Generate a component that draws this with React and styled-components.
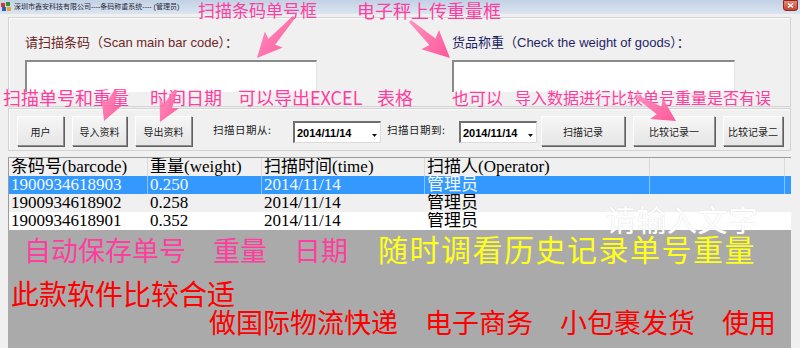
import React from 'react'
import styled, { createGlobalStyle } from 'styled-components'

const GlobalStyle = createGlobalStyle`
  html, body { margin: 0; padding: 0; }
  body {
    width: 800px;
    height: 348px;
    overflow: hidden;
    background: #f0f0f0;
    font-family: "Noto Sans CJK SC", "Liberation Sans", sans-serif;
  }
`

const Window = styled.div`
  position: relative;
  width: 800px;
  height: 348px;
  display: flex;
  flex-direction: column;
  background: #f0f0f0;
  overflow: hidden;
`

const TitleBar = styled.div`
  height: 14px;
  display: flex;
  align-items: center;
  gap: 3px;
  padding: 0 2px 0 1px;
  background: linear-gradient(#c2d1e5, #dce5f0);
  font-family: "Liberation Sans", "Noto Sans CJK SC", sans-serif;
  font-size: 7px;
  line-height: 14px;
  color: #1d2838;
  white-space: nowrap;
`

const Close = styled.div`
  margin-left: auto;
  width: 13px;
  height: 9px;
  margin-top: -3px;
  border-radius: 0 0 3px 3px;
  background: linear-gradient(#e88a7c, #c8412d);
  border: 1px solid #8c2c20;
  display: flex;
  align-items: center;
  justify-content: center;
`

const Body = styled.div`
  flex: 1;
  display: flex;
  flex-direction: column;
  padding: 3px 9px 0 8px;
`

const GroupBox = styled.div`
  box-sizing: border-box;
  height: ${p => p.$h}px;
  margin-bottom: ${p => p.$mb}px;
  border: 1px solid #d3d3d3;
  box-shadow: inset 1px 1px 0 #fbfbfb;
  display: flex;
  padding: ${p => p.$pad};
`

const ToolRow = styled.div`
  height: 30px;
  display: flex;
  align-items: center;
`

const Field = styled.div`
  width: ${p => p.$w}px;
  margin-right: ${p => p.$mr || 0}px;
  display: flex;
  flex-direction: column;
  gap: 9px;
`

const FieldLabel = styled.div`
  font-family: "Liberation Sans", "Noto Sans CJK SC", sans-serif;
  font-size: 13px;
  line-height: 16px;
  color: ${p => p.$color};
  white-space: nowrap;
`

const TextInput = styled.div`
  height: 30px;
  background: #fff;
  border-top: 2px solid #8a8a8a;
  border-left: 2px solid #8a8a8a;
  border-right: 1px solid #e3e3e3;
`

const Button = styled.div`
  box-sizing: border-box;
  width: ${p => p.$w}px;
  height: 30px;
  margin-right: ${p => p.$mr}px;
  display: flex;
  align-items: center;
  justify-content: center;
  background: linear-gradient(#f6f6f6, #e6e6e6);
  border: 1px solid;
  border-color: #fdfdfd #8e8e8e #8e8e8e #fdfdfd;
  box-shadow: 1px 1px 0 #5f5f5f;
  font-size: 10px;
  color: #1b1b1b;
  white-space: nowrap;
`

const DateLabel = styled.div`
  width: ${p => p.$w}px;
  margin-left: ${p => p.$ml}px;
  font-size: 10.5px;
  color: #1b1b1b;
  letter-spacing: 0.5px;
  white-space: nowrap;
  margin-top: -4px;
`

const Combo = styled.div`
  box-sizing: border-box;
  width: ${p => p.$w}px;
  height: 22px;
  margin-top: 2px;
  margin-right: ${p => p.$mr}px;
  background: #fff;
  border-top: 2px solid #6f6f6f;
  border-left: 2px solid #6f6f6f;
  border-right: 1px solid #dcdcdc;
  border-bottom: 1px solid #dcdcdc;
  display: flex;
  align-items: center;
  padding: 0 3px 0 2px;
  font-family: "Liberation Sans", sans-serif;
  font-weight: bold;
  font-size: 11px;
  color: #000;
  svg { margin-left: auto; margin-top: 5px; }
`

const Table = styled.div`
  margin-top: 6px;
  display: grid;
  grid-template-columns: 139px 114px 163px 225px 135px 1fr;
  border-top: 1px solid #9b9b9b;
  border-left: 1px solid #9b9b9b;
  background: #fff;
  font-family: "Liberation Serif", "Noto Sans CJK SC", serif;
  font-size: 17px;
`

const Cell = styled.div`
  height: 18px;
  line-height: 18px;
  padding-left: 2px;
  overflow: hidden;
  white-space: nowrap;
  background: ${p => p.$bg};
  color: ${p => p.$fg};
  border-right: 1px solid ${p => p.$line};
`

const GrayArea = styled.div`
  flex: 1;
  background: #aaaaaa;
  padding: 3px 0 0 0;
  display: flex;
  flex-direction: column;
`

const Line = styled.div`
  display: flex;
  align-items: baseline;
  padding-left: ${p => p.$pl}px;
  margin-top: ${p => p.$mt || 0}px;
  white-space: nowrap;
`

const Big = styled.span`
  font-size: ${p => p.$size}px;
  line-height: ${p => p.$lh}px;
  color: ${p => p.$color};
  letter-spacing: ${p => p.$ls || 0}px;
  margin-left: ${p => p.$ml || 0}px;
`

const Overlay = styled.div`
  position: absolute;
  inset: 0;
  pointer-events: none;
`

const Note = styled.span`
  position: absolute;
  left: ${p => p.$x}px;
  top: ${p => p.$y}px;
  font-size: ${p => p.$size}px;
  line-height: 1;
  color: #ff3d9e;
  white-space: nowrap;
`

const Watermark = styled.span`
  position: absolute;
  left: 606px;
  top: 203px;
  font-size: 30px;
  line-height: 1;
  color: #ffffff;
  text-shadow: 0 0 1px #c9c9c9;
  letter-spacing: 0.5px;
`

const ArrowLayer = styled.svg`
  position: absolute;
  left: 0;
  top: 0;
`

function arrowPoints([x1, y1, x2, y2, hw, hl]) {
  const dx = x2 - x1
  const dy = y2 - y1
  const len = Math.hypot(dx, dy)
  const ux = dx / len
  const uy = dy / len
  const nx = -uy
  const ny = ux
  const bx = x2 - ux * hl
  const by = y2 - uy * hl
  const s0 = 1.5
  const s1 = 4.5
  const pts = [
    [x1 + nx * s0, y1 + ny * s0],
    [bx + nx * s1, by + ny * s1],
    [bx + nx * hw / 2 - ux * 3, by + ny * hw / 2 - uy * 3],
    [x2, y2],
    [bx - nx * hw / 2 - ux * 3, by - ny * hw / 2 - uy * 3],
    [bx - nx * s1, by - ny * s1],
    [x1 - nx * s0, y1 - ny * s0],
  ]
  return pts.map(p => p.map(v => v.toFixed(1)).join(',')).join(' ')
}

const arrows = [
  [294, 17, 257, 58, 24, 22],
  [410, 21, 450, 58, 26, 24],
  [116, 90, 104, 121, 22, 18],
  [176, 90, 160, 122, 22, 18],
  [636, 96, 676, 121, 24, 20],
]

const columns = ['条码号(barcode)', '重量(weight)', '扫描时间(time)', '扫描人(Operator)', '']

const rows = [
  ['1900934618903', '0.250', '2014/11/14', '管理员', ''],
  ['1900934618902', '0.258', '2014/11/14', '管理员', ''],
  ['1900934618901', '0.352', '2014/11/14', '管理员', ''],
]

const rowLook = [
  { bg: '#3399ff', fg: '#f4f8ff', line: '#8cc2ff' },
  { bg: '#f0f0f0', fg: '#000', line: '#f0f0f0' },
  { bg: '#ffffff', fg: '#000', line: '#ffffff' },
]

const Chevron = () => (
  <svg width="5" height="3" viewBox="0 0 5 3">
    <path d="M0 0 L2.5 3 L5 0 Z" fill="#111" />
  </svg>
)

const AppIcon = () => (
  <svg width="10" height="10" viewBox="0 0 10 10">
    <rect x="0" y="1" width="4" height="4" fill="#d23b2b" />
    <rect x="5" y="0" width="4" height="4" fill="#2f8f3a" />
    <rect x="1" y="5" width="4" height="4" fill="#2a5fc4" />
    <rect x="6" y="5" width="4" height="4" fill="#e2a52a" />
  </svg>
)

export default function App() {
  return (
    <Window>
      <GlobalStyle />
      <TitleBar>
        <AppIcon />
        <span>深圳市鑫安科技有限公司----条码称重系统----  (管理员)</span>
        <Close>
          <svg width="7" height="5" viewBox="0 0 7 5">
            <path d="M1 0.5 L6 4.5 M6 0.5 L1 4.5" stroke="#fff" strokeWidth="1.4" />
          </svg>
        </Close>
      </TitleBar>

      <Body>
        <GroupBox $h={90} $mb={1} $pad="17px 0 0 16px">
          <Field $w={292} $mr={135}>
            <FieldLabel $color="#6e2626">请扫描条码（Scan main bar code）：</FieldLabel>
            <TextInput />
          </Field>
          <Field $w={283}>
            <FieldLabel $color="#1f1f66">货品称重（Check the weight of goods）：</FieldLabel>
            <TextInput />
          </Field>
        </GroupBox>

        <GroupBox $h={43} $mb={0} $pad="7px 0 0 8px">
          <ToolRow>
            <Button $w={47} $mr={8}>用户</Button>
            <Button $w={55} $mr={8}>导入资料</Button>
            <Button $w={57} $mr={0}>导出资料</Button>
            <DateLabel $w={80} $ml={21}>扫描日期从:</DateLabel>
            <Combo $w={88} $mr={0}>2014/11/14<Chevron /></Combo>
            <DateLabel $w={72} $ml={6}>扫描日期到:</DateLabel>
            <Combo $w={78} $mr={4}>2014/11/14<Chevron /></Combo>
            <Button $w={84} $mr={8}>扫描记录</Button>
            <Button $w={82} $mr={8}>比较记录一</Button>
            <Button $w={60} $mr={0}>比较记录二</Button>
          </ToolRow>
        </GroupBox>

        <Table>
          {columns.map((c, i) => (
            <Cell key={'h' + i} $bg="#f0f0f0" $fg="#000" $line="#dadada">{c}</Cell>
          ))}
          <Cell $bg="#f0f0f0" $fg="#000" $line="#f0f0f0" />
          {rows.map((r, ri) => (
            <React.Fragment key={ri}>
              {r.map((v, ci) => (
                <Cell key={ci} $bg={rowLook[ri].bg} $fg={rowLook[ri].fg} $line={rowLook[ri].line}>{v}</Cell>
              ))}
              <Cell $bg={rowLook[ri].bg} $fg={rowLook[ri].fg} $line={rowLook[ri].bg} />
            </React.Fragment>
          ))}
        </Table>

        <GrayArea>
          <Line $pl={16}>
            <Big $size={27} $lh={30} $color="#ff3d9e">自动保存单号　重量　日期</Big>
            <Big $size={30} $lh={30} $ls={1.5} $ml={30} $color="#ffff1a">随时调看历史记录单号重量</Big>
          </Line>
          <Line $pl={3} $mt={14}>
            <Big $size={28} $lh={28} $color="#ff0000">此款软件比较合适</Big>
          </Line>
          <Line $pl={201} $mt={1}>
            <Big $size={27} $lh={27} $color="#ff0000">做国际物流快递　电子商务　小包裹发货　使用</Big>
          </Line>
        </GrayArea>
      </Body>

      <Overlay>
        <Watermark>请输入文字</Watermark>
        <Note $x={198} $y={1} $size={17}>扫描条码单号框</Note>
        <Note $x={357} $y={1} $size={18}>电子秤上传重量框</Note>
        <Note $x={3} $y={88} $size={18}>扫描单号和重量</Note>
        <Note $x={150} $y={88} $size={18}>时间日期</Note>
        <Note $x={238} $y={88} $size={18}>可以导出EXCEL</Note>
        <Note $x={377} $y={88} $size={18}>表格</Note>
        <Note $x={452} $y={89} $size={17}>也可以</Note>
        <Note $x={515} $y={89} $size={16}>导入数据进行比较单号重量是否有误</Note>
        <ArrowLayer width="800" height="348" viewBox="0 0 800 348">
          <defs>
            <linearGradient id="pink" x1="0" y1="0" x2="1" y2="1">
              <stop offset="0" stopColor="#ff8cbc" />
              <stop offset="1" stopColor="#ff4a92" />
            </linearGradient>
          </defs>
          {arrows.map((a, i) => (
            <polygon key={i} points={arrowPoints(a)} fill="url(#pink)" opacity="0.92" />
          ))}
        </ArrowLayer>
      </Overlay>
    </Window>
  )
}
